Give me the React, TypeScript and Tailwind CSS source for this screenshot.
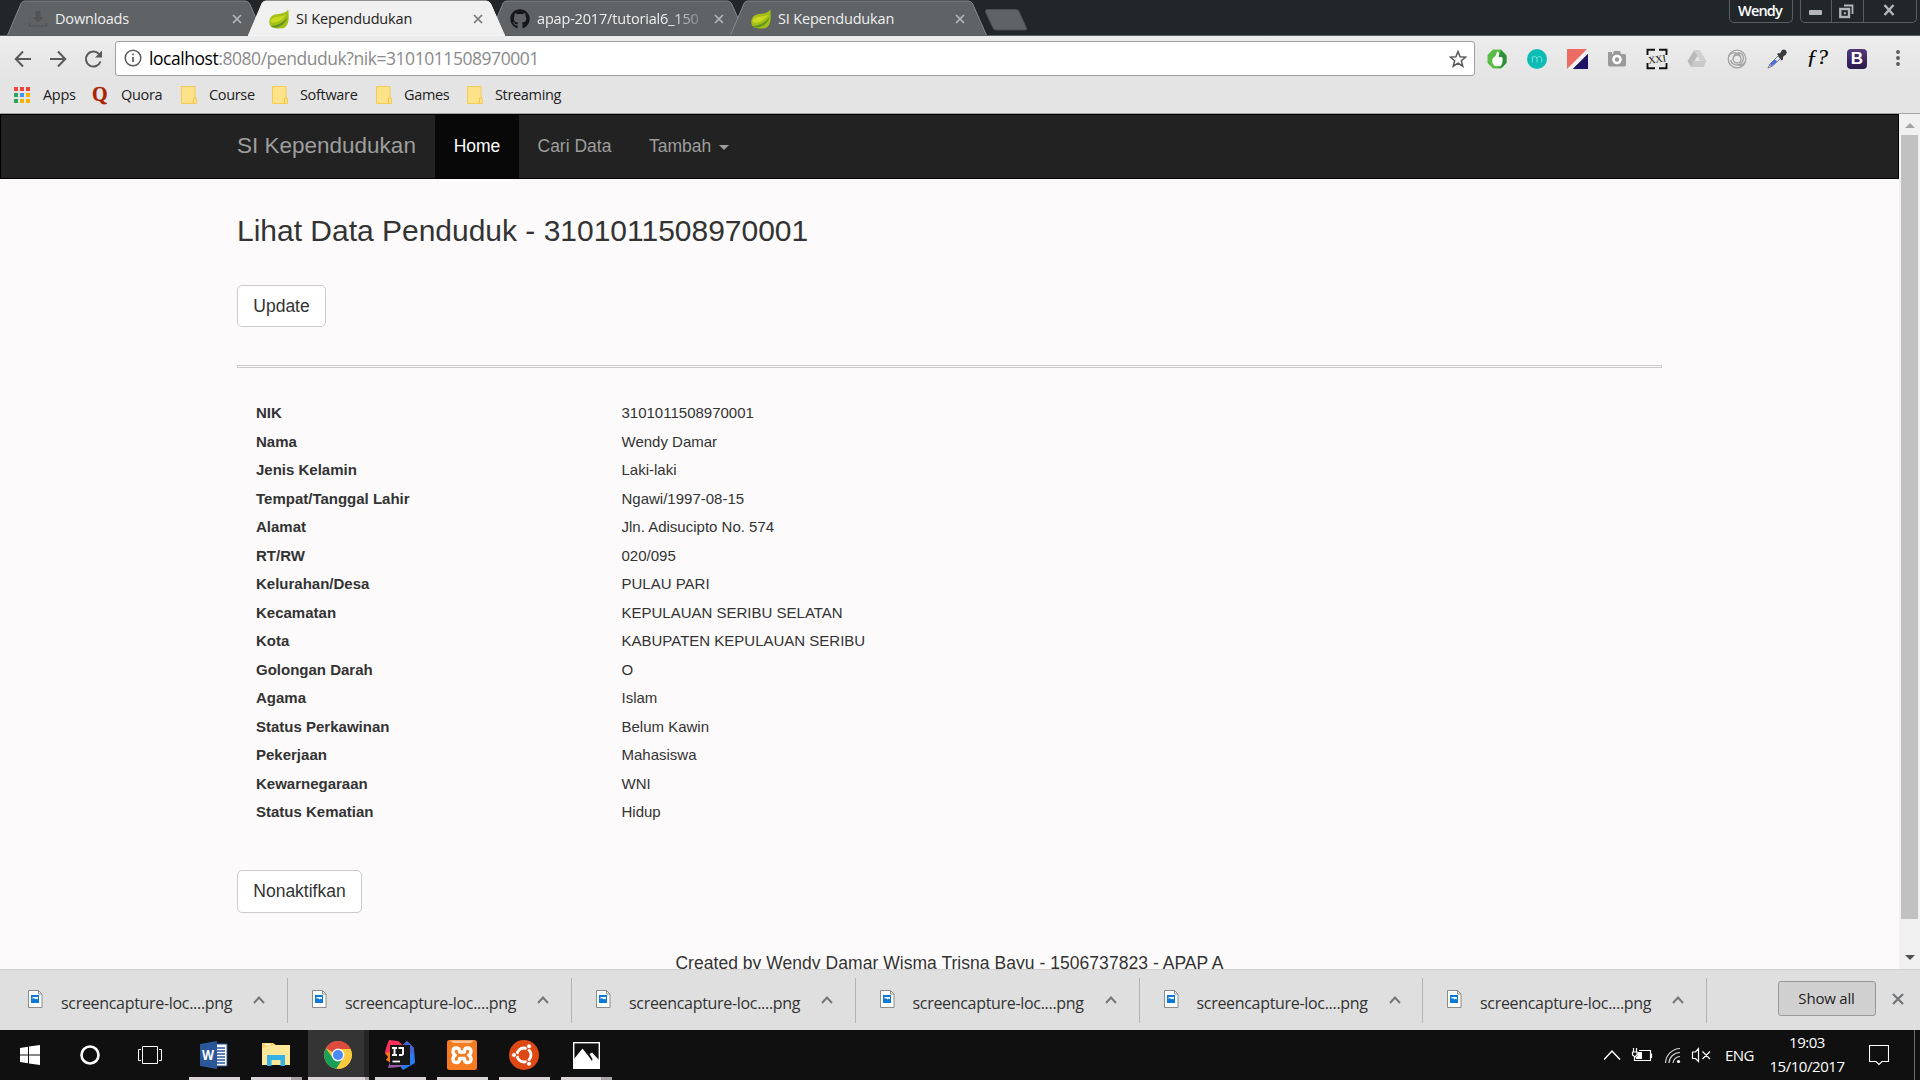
import React from "react";
import { FaGithub } from "react-icons/fa";

const ui = "font-['Open_Sans','Noto_Sans',sans-serif]";

function Leaf() {
  return (
    <svg width="20" height="20" viewBox="0 0 20 20" className="shrink-0">
      <path d="M19.300 0.500C20 8 20.500 16 15 19L11 19.500C8 19.700 4 19.300 2 17.500C-0.800 15-0.300 8.500 4 6.200C8 4.300 16 5.500 19.300 0.500Z" fill="#a3bf16" />
      <path d="M18.700 2C18 6 15 7 10 7.500C5 8 1.500 9.500 1.500 13C5 15 15 13 18.700 2Z" fill="#c9d91f" />
      <path d="M2 17C8 16.500 14.500 14 18.500 8C17.300 13 13 17 8.500 18.300C6 18.800 3.500 18.500 2 17Z" fill="#5f9527" />
    </svg>
  );
}

function Close({ color = "#b4b6b8" }: { color?: string }) {
  return (
    <svg width="10" height="10" viewBox="0 0 10 10" className="absolute left-[224.500px] top-[14px]">
      <path d="M1 1L9 9M9 1L1 9" stroke={color} strokeWidth="1.700" />
    </svg>
  );
}

function Tab({ icon, title, active = false, fade = false }: { icon: React.ReactNode; title: string; active?: boolean; fade?: boolean }) {
  return (
    <div className={`relative -mr-[16px] h-[36px] w-[257px] shrink-0 ${active ? "z-10" : ""}`}>
      <svg width="257" height="36" viewBox="0 0 257 36" className="absolute inset-0">
        <path
          d="M0 36L1.500 33L14 3.500Q15 1 18 1H238Q241 1 242.500 3.500L255.500 33L257 36Z"
          fill={active ? "#f0f0f0" : "#5f6366"}
          stroke={active ? "#f8f8f8" : "#84888a"}
          strokeWidth="1"
        />
      </svg>
      <div className="absolute left-[21px] top-[9px]">{icon}</div>
      <div
        className={`absolute left-[48px] top-[8px] whitespace-nowrap text-[14.500px] leading-[22px] tracking-[-0.180px] ${
          active ? "text-[#222]" : "text-[#eee]"
        } ${fade ? "[mask-image:linear-gradient(to_right,black_134px,transparent_172px)]" : ""}`}
      >
        {title}
      </div>
      <Close color={active ? "#777" : undefined} />
    </div>
  );
}

function TabStrip() {
  return (
    <div className="relative flex h-[36px] bg-[#212629] pl-[7px]">
      <Tab
        title="Downloads"
        icon={
          <svg width="20" height="20" viewBox="0 0 20 20">
            <path d="M7.500 2H12.500V8H15.500L10 13.500L4.500 8H7.500Z" fill="#535353" />
            <path d="M1.500 14V17H18.500V14" fill="none" stroke="#535353" strokeWidth="1.200" />
          </svg>
        }
      />
      <Tab title="SI Kependudukan" active icon={<Leaf />} />
      <Tab title="apap-2017/tutorial6_150" fade icon={<FaGithub size={20} color="#17171a" />} />
      <Tab title="SI Kependudukan" icon={<Leaf />} />
      <svg width="44" height="24" viewBox="0 0 44 24" className="ml-[13px] mt-[8px]">
        <path d="M3 1.500H32Q34 1.500 35 3.500L42.500 20Q43 22 41 22H12Q10 22 9 20L1.500 4Q1 1.500 3 1.500Z" fill="#5f6366" stroke="#4a4e51" />
      </svg>
      <div className="absolute bottom-0 left-0 h-px w-full bg-[#5a5e60]" />
      <div className="absolute right-[127px] top-0 flex h-[23px] w-[64px] items-center justify-center rounded-b-[5px] border border-t-0 border-[#595d60] pr-[2px] text-[14.500px] font-semibold tracking-[-0.850px] text-white">
        Wendy
      </div>
      <div className="absolute right-[3px] top-0 flex h-[23px] w-[117px] rounded-b-[5px] border border-t-0 border-[#595d60]">
        <div className="flex w-[31px] items-center justify-center border-r border-[#595d60]">
          <div className="mr-[2px] mt-[3px] h-[5px] w-[13px] rounded-[1px] bg-[#b3b5b6]" />
        </div>
        <div className="flex w-[32px] items-center justify-center border-r border-[#595d60] pr-[3px]">
          <svg width="15" height="15" viewBox="0 0 15 15">
            <path d="M5 1.500H13.500V10" fill="none" stroke="#b3b5b6" strokeWidth="1.800" />
            <rect x="1.300" y="5" width="8.700" height="8" fill="none" stroke="#b3b5b6" strokeWidth="2.400" />
            <rect x="4.800" y="8.200" width="2" height="2" fill="#b3b5b6" />
          </svg>
        </div>
        <div className="flex flex-1 items-center justify-center pb-[2px] pr-[2px]">
          <svg width="12" height="12" viewBox="0 0 12 12">
            <path d="M1.500 1L10.500 11M10.500 1L1.500 11" stroke="#b3b5b6" strokeWidth="2.500" />
          </svg>
        </div>
      </div>
    </div>
  );
}

const extensions: React.ReactNode[] = [
  <svg key="thumb" width="20" height="20" viewBox="0 0 20 20">
    <path d="M6 0.500H14L19.500 6V14L14 19.500H6L0.500 14V6Z" fill="#5abd45" />
    <path d="M11.500 8H15Q16.500 9 15.800 12.500Q15.500 16 13.500 17.500L10 19L15 18.500L19.500 14V7L14 1Z" fill="#2f8f3f" />
    <path d="M10.500 2.500Q12.300 2.500 12 5L11.700 8H14.500Q16 8.500 15.500 11Q15.200 15.500 13.500 16.800Q10 17.800 7 16.500Q5 15 5.200 11Q5.700 8.500 8 7.500Q9.500 6 9.700 3.500Z" fill="#fff" />
  </svg>,
  <svg key="m" width="20" height="20" viewBox="0 0 20 20">
    <circle cx="10" cy="10" r="10" fill="#0cbcb4" />
    <path d="M5.300 13.500V7.500M5.300 9Q6 7.500 7.700 7.500Q10 7.500 10 9.700V13.500M10 9.700Q10.300 7.500 12.300 7.500Q14.700 7.500 14.700 9.700V13.500" stroke="#6fe3df" fill="none" />
  </svg>,
  <svg key="tri" width="21" height="20" viewBox="0 0 21 20">
    <path d="M0 0H20L0 20Z" fill="#ec6c63" />
    <path d="M21 4.500V20H5.500Z" fill="#1d1464" />
    <path d="M20.500 0.500L1 20H5.500L21 4.500Z" fill="#f4f2f4" />
  </svg>,
  <svg key="camera" width="20" height="20" viewBox="0 0 20 20">
    <path d="M1 5V3H5V5H6L7 2H13L14 5H17.500Q19 5 19 6.500V15.500Q19 17.500 17.500 17.500H2.500Q1 17.500 1 15.500Z" fill="#9a9a9a" />
    <circle cx="10" cy="10.500" r="3.500" fill="#9a9a9a" stroke="#fff" strokeWidth="2.600" />
  </svg>,
  <svg key="xxi" width="22" height="22" viewBox="0 0 22 22">
    <path d="M1.500 7V1.800H9M13 1.800H20.500V7M1.500 15V20.200H9M13 20.200H20.500V15" fill="none" stroke="#111" strokeWidth="1.900" />
    <text x="11" y="14.500" textAnchor="middle" fontFamily="Liberation Serif" fontSize="10" transform="rotate(-8 11 11)" fill="#111">XXI</text>
  </svg>,
  <svg key="drive" width="20" height="20" viewBox="0 0 20 20">
    <path d="M7 1.500H13L6.500 18H4L0.500 12Z" fill="#b9b9b9" />
    <path d="M7 1.500H13L19.500 12H13.500Z" fill="#d0d0d0" />
    <path d="M6.500 12H19.500L16.500 18H4Z" fill="#c9c9c9" />
    <path d="M10 7.500L12.800 12H7.500Z" fill="#e7e7e7" />
  </svg>,
  <svg key="swirl" width="20" height="20" viewBox="0 0 20 20" fill="none" stroke="#a3a3a3" strokeWidth="1.300">
    <circle cx="10" cy="10" r="8.800" />
    <path d="M1.500 8Q3 3.500 8 4Q14 5 14 10Q14 14 10 14Q6.500 14 6 10Q6 5.500 11 4Q16 4 16.500 9Q16 15 10.500 16Q5 16 3.500 11M18 13Q15 17.500 10.500 16M6 10Q6.500 6 10 6Q14 6 14 10" />
  </svg>,
  <svg key="dropper" width="20" height="20" viewBox="0 0 20 20">
    <path d="M1 19L3 15L11 7L13.500 9.500L5.500 17Z" fill="#dfe6f4" stroke="#777" />
    <path d="M3 17L4 14.500L8 10.500L10 12.500L5.500 16.500Z" fill="#3f6be8" />
    <path d="M10 5L11.500 4L13 4.500L15 1Q18.500 -0.500 19.700 3Q20 5.500 17 7L16 8L16 10.500L14.500 11.500Z" fill="#3b3b3f" />
  </svg>,
  <div key="f" className="pb-[4px] font-['Liberation_Serif',serif] text-[22px] leading-[20px] tracking-[-0.500px] text-black [-webkit-text-stroke:0.200px_black]">
    <i>ƒ?</i>
  </div>,
  <div key="b" className="flex h-[20px] w-[20px] items-center justify-center rounded-[4px] bg-linear-to-b from-[#54397d] to-[#2c1a4a] font-['Liberation_Sans',sans-serif] text-[17px] font-bold text-white">B</div>,
];

function Toolbar() {
  return (
    <div className="flex h-[42px] items-center bg-linear-to-b from-[#ededed] to-[#e4e4e4]">
      <svg width="104" height="20" viewBox="0 0 104 20" className="ml-[11px] mt-[4px] shrink-0" fill="none" stroke="#5a5a5a" strokeWidth="2">
        <path d="M20 10H5M12 2.500L4.800 10L12 17.500" />
        <path d="M39 10H54M47 2.500L54.200 10L47 17.500" />
        <path d="M88 5A7.500 7.500 0 1 0 89.500 12.500" />
        <path d="M91 1.500V8.500H84Z" fill="#5a5a5a" stroke="none" />
      </svg>
      <div className="mt-[2px] flex h-[35px] w-[1360px] shrink-0 items-center rounded-[3px] border border-[#a0a0a0] bg-white">
        <svg width="18" height="18" viewBox="0 0 18 18" className="ml-[8px]">
          <circle cx="9" cy="9" r="7.800" fill="none" stroke="#5a5a5a" strokeWidth="1.500" />
          <path d="M9 8V13M9 4.500V6.300" stroke="#5a5a5a" strokeWidth="1.700" />
        </svg>
        <div className="ml-[7px] whitespace-nowrap text-[17.500px] tracking-[-0.450px] text-[#8a8a8a]">
          <span className="text-black">localhost</span>:8080/penduduk?nik=3101011508970001
        </div>
        <svg width="18" height="18" viewBox="0 0 18 18" className="ml-auto mr-[7px] mt-px">
          <path d="M9 1.500L11.100 6.800L16.700 7.100L12.300 10.700L13.800 16.200L9 13.100L4.200 16.200L5.700 10.700L1.300 7.100L6.900 6.800Z" fill="none" stroke="#5a5a5a" strokeWidth="1.500" />
        </svg>
      </div>
      <div className="ml-[2px] mt-[3px] flex">
        {extensions.map((e, i) => (
          <div key={i} className="flex h-[24px] w-[40px] items-center justify-center">{e}</div>
        ))}
      </div>
      <svg width="4" height="16" viewBox="0 0 4 16" className="ml-[19px] mt-[2px]" fill="#5a5a5a">
        <circle cx="2" cy="2" r="1.900" /><circle cx="2" cy="8" r="1.900" /><circle cx="2" cy="14" r="1.900" />
      </svg>
    </div>
  );
}

function Folder() {
  return (
    <svg width="16" height="18" viewBox="0 0 16 18">
      <path d="M0.500 0.500H14V11.500L15.500 12.500V17.500H0.500Z" fill="#fee28a" stroke="#f6cb55" />
      <path d="M12.500 17V12H15" fill="none" stroke="#f2c243" />
    </svg>
  );
}

const appColors = ["#f04438", "#f04438", "#f04438", "#2ba35b", "#3b94ee", "#f5b400", "#2ba35b", "#f5b400", "#f5b400"];

function Bookmarks() {
  const items: { w: string; label: string; icon: React.ReactNode }[] = [
    {
      w: "w-[78px]", label: "Apps",
      icon: (
        <div className="-ml-px grid w-[16px] grid-cols-3 gap-[2px]">
          {appColors.map((c, i) => <div key={i} className="h-[4px] w-[4px]" style={{ backgroundColor: c }} />)}
        </div>
      ),
    },
    { w: "w-[88px]", label: "Quora", icon: <span className="-ml-px -mt-[2px] block font-['Liberation_Serif',serif] text-[20px] font-bold leading-[18px] text-[#aa2200] [-webkit-text-stroke:0.300px_#aa2200]">Q</span> },
    { w: "w-[91px]", label: "Course", icon: <Folder /> },
    { w: "w-[104px]", label: "Software", icon: <Folder /> },
    { w: "w-[91px]", label: "Games", icon: <Folder /> },
    { w: "w-[120px]", label: "Streaming", icon: <Folder /> },
  ];
  return (
    <div className="flex h-[36px] items-center border-b border-[#a3a3a3] bg-[#e4e4e4] pb-[2px] pl-[15px] text-[14.500px] tracking-[-0.330px] text-[#222]">
      {items.map((b) => (
        <div key={b.label} className={`flex items-center ${b.w}`}>
          <div className="mt-px w-[28px] shrink-0">{b.icon}</div>
          <div className="whitespace-nowrap">{b.label}</div>
        </div>
      ))}
    </div>
  );
}

const rows: [string, string][] = [
  ["NIK", "3101011508970001"],
  ["Nama", "Wendy Damar"],
  ["Jenis Kelamin", "Laki-laki"],
  ["Tempat/Tanggal Lahir", "Ngawi/1997-08-15"],
  ["Alamat", "Jln. Adisucipto No. 574"],
  ["RT/RW", "020/095"],
  ["Kelurahan/Desa", "PULAU PARI"],
  ["Kecamatan", "KEPULAUAN SERIBU SELATAN"],
  ["Kota", "KABUPATEN KEPULAUAN SERIBU"],
  ["Golongan Darah", "O"],
  ["Agama", "Islam"],
  ["Status Perkawinan", "Belum Kawin"],
  ["Pekerjaan", "Mahasiswa"],
  ["Kewarnegaraan", "WNI"],
  ["Status Kematian", "Hidup"],
];

function Page() {
  return (
    <div className="h-[855px] flex-1 overflow-hidden bg-[#fcfafb] font-['Liberation_Sans',sans-serif] text-[#333]">
      <nav className="flex h-[65px] border border-[#000] bg-[#222] pl-[236px] text-[17.500px] text-[#9d9d9d]">
        <div className="w-[198px] whitespace-nowrap pt-[17px] text-[22.500px] leading-[27px]">SI Kependudukan</div>
        <div className="w-[84px] bg-[#080808] pt-[19px] text-center leading-[25px] text-white">Home</div>
        <div className="ml-[18.500px] w-[111.500px] pt-[19px] leading-[25px]">Cari Data</div>
        <div className="flex pt-[19px] leading-[25px]">
          Tambah
          <div className="ml-[8px] mt-[11px] h-0 w-0 border-x-[5px] border-t-[5px] border-x-transparent border-t-[#9d9d9d]" />
        </div>
      </nav>
      <main className="ml-[237px] w-[1425px] pt-[35px]">
        <h1 className="text-[30px] leading-[33px] tracking-[-0.010px]">Lihat Data Penduduk - 3101011508970001</h1>
        <button className="mt-[38px] block h-[42px] w-[89px] rounded-[5px] border border-[#ccc] bg-white text-[17.500px]">Update</button>
        <div className="mt-[38px] h-[3px] border border-[#ccc]" />
        <div className="mt-[31px] pl-[19px] text-[15px] leading-[22px]">
          {rows.map(([k, v], i) => (
            <div key={k} className={`flex pt-[3px] ${i % 2 ? "h-[28px]" : "h-[29px]"}`}>
              <div className="w-[365.500px] font-bold">{k}</div>
              <div>{v}</div>
            </div>
          ))}
        </div>
        <button className="mt-[43px] block h-[43px] w-[125px] rounded-[5px] border border-[#ccc] bg-white text-[17.500px]">Nonaktifkan</button>
      </main>
      <footer className="mt-[38px] text-center text-[17.500px] leading-[25px] tracking-[0.040px]">Created by Wendy Damar Wisma Trisna Bayu - 1506737823 - APAP A</footer>
    </div>
  );
}

function Scrollbar() {
  return (
    <div className="flex h-[855px] w-[21px] flex-col items-center bg-[#f1f1f1]">
      <div className="mt-[9px] h-0 w-0 border-x-[5px] border-b-[5px] border-x-transparent border-b-[#a3a3a3]" />
      <div className="mt-[7px] h-[784px] w-[17px] bg-[#c1c1c1]" />
      <div className="mt-[36px] h-0 w-0 border-x-[5px] border-t-[5px] border-x-transparent border-t-[#505050]" />
    </div>
  );
}

function Shelf() {
  return (
    <div className="flex h-[61px] border-t border-[#d2d0d0] bg-[#dfdfdf] text-[#333]">
      {[0, 1, 2, 3, 4, 5].map((i) => (
        <div key={i} className={`flex shrink-0 ${i === 0 ? "w-[288px] pl-[28px]" : i % 2 ? "w-[284px] pl-[24px]" : "w-[283.500px] pl-[24px]"}`}>
          <svg width="15" height="18" viewBox="0 0 15 18" className="mt-[20px] shrink-0">
            <path d="M0.500 0.500H10.500L14 4V17.500H0.500Z" fill="#fff" stroke="#8b8b8b" />
            <path d="M10.500 0.500V4H14" fill="none" stroke="#8b8b8b" />
            <path d="M3 5H11V13H3Z" fill="#0b79d8" />
            <path d="M4.500 7H10V9.500L8.800 8.500L7.500 9.500L6 8L4.500 9Z" fill="#fff" />
          </svg>
          <div className="ml-[18px] mt-[21px] w-[180px] whitespace-nowrap text-[16px] leading-[24px] tracking-[-0.310px]">screencapture-loc....png</div>
          <svg width="12" height="8" viewBox="0 0 12 8" className="ml-[12px] mt-[26px] shrink-0">
            <path d="M1 7L6 1.500L11 7" fill="none" stroke="#777" strokeWidth="2" />
          </svg>
          <div className="ml-auto mt-[8px] h-[45px] w-px bg-[#b3b3b3]" />
        </div>
      ))}
      <div className="ml-[71px] mt-[11px] flex h-[35px] w-[98px] items-center justify-center rounded-[3px] border border-[#999] bg-[#d0d0d0] pb-px pr-px text-[15px] tracking-[-0.200px] text-[#222]">Show all</div>
      <svg width="12" height="12" viewBox="0 0 12 12" className="ml-[16px] mt-[23px]">
        <path d="M1 1L11 11M11 1L1 11" stroke="#73777a" strokeWidth="2.300" />
      </svg>
    </div>
  );
}

const apps: { name: string; icon: React.ReactNode; stacked?: boolean; active?: boolean }[] = [
  {
    name: "word",
    icon: (
      <svg width="28" height="28" viewBox="0 0 28 28">
        <path d="M14 3H27V25H14Z" fill="#fff" stroke="#2b579a" />
        <path d="M16 7H25M16 10H25M16 13H25M16 16H25M16 19H25M16 22H25" stroke="#2b579a" strokeWidth="1.300" />
        <path d="M0 3L17 0V28L0 25Z" fill="#2b579a" />
        <text x="2" y="19" fontFamily="Open Sans" fontWeight="700" fontSize="14" textLength="12" lengthAdjust="spacingAndGlyphs" fill="#fff">W</text>
      </svg>
    ),
  },
  {
    name: "explorer", stacked: true,
    icon: (
      <svg width="28" height="28" viewBox="0 0 28 28">
        <path d="M0 2H11L14 4H27V24H0Z" fill="#fbd367" />
        <path d="M0 7L11 4H28V24H0Z" fill="#ffe79a" />
        <path d="M3 3.500H8" stroke="#fff" strokeWidth="1.500" />
        <path d="M5 25V14H23V25H18.500V19H9.500V25Z" fill="#35b1e6" />
      </svg>
    ),
  },
  {
    name: "chrome", active: true,
    icon: (
      <svg width="28" height="28" viewBox="0 0 28 28">
        <circle cx="14" cy="14" r="13.800" fill="#fbca3e" />
        <path d="M14 14L1.900 7.200A13.800 13.800 0 0 1 26.500 8H14Z" fill="#dc4b3e" />
        <path d="M14 14L8.800 17L1.900 7.200A13.800 13.800 0 0 0 12.500 27.700L19.200 17Z" fill="#1a9f5b" />
        <path d="M14 8H26.500A13.800 13.800 0 0 1 12.500 27.700L19.200 17Z" fill="#fbca3e" />
        <circle cx="14" cy="14" r="6.400" fill="#f4f4f4" />
        <circle cx="14" cy="14" r="5" fill="#4a8af4" />
      </svg>
    ),
  },
  {
    name: "intellij",
    icon: (
      <svg width="30" height="30" viewBox="0 0 30 30">
        <path d="M1 8L4 0L13 1L20 7L12 20L0 13Z" fill="#fe315d" />
        <path d="M18 5L22 1L29 8L30 23L18 30L12 22Z" fill="#2a7bf0" />
        <path d="M18 5L22 1L29 8V14L22 12Z" fill="#4a63d2" />
        <path d="M0 13L6 12L8 24L1 20L3 17Z" fill="#f97a12" />
        <path d="M3 28L6 18L18 26L14 27Z" fill="#9b59a8" />
        <rect x="5" y="5" width="20" height="20" fill="#171717" />
        <path d="M7 8H12M9.500 8V15M7 15H12M13.500 8H18V13.500Q18 15 16.300 15H14" fill="none" stroke="#fff" strokeWidth="1.900" />
        <path d="M7.500 21.500H15" stroke="#fff" strokeWidth="1.700" />
      </svg>
    ),
  },
  {
    name: "xampp",
    icon: (
      <svg width="30" height="30" viewBox="0 0 30 30">
        <rect width="30" height="30" rx="2.500" fill="#f47b20" />
        <path d="M3 0.500H27L24 3H6Z" fill="#fac29a" />
        <path
          d="M12.500 11Q12.500 8 9.300 8Q6 8 6 11.500Q6 14 8.300 15Q6 16.500 6 19.300Q6 22.500 9.300 22.500Q12.500 22.500 12.500 19.500V18.500H17.500V19.500Q17.500 22.500 20.700 22.500Q24 22.500 24 19.300Q24 16.500 21.700 15Q24 14 24 11.500Q24 8 20.700 8Q17.500 8 17.500 11V12H12.500Z"
          fill="none"
          stroke="#fff"
          strokeWidth="3.400"
          strokeLinejoin="round"
        />
      </svg>
    ),
  },
  {
    name: "ubuntu",
    icon: (
      <svg width="30" height="30" viewBox="0 0 30 30">
        <circle cx="15" cy="15" r="15" fill="#dd4814" />
        <circle cx="15" cy="15" r="7" fill="none" stroke="#fff" strokeWidth="2.800" />
        <path d="M15 15L2 15M15 15L21.500 3.700M15 15L21.500 26.300" stroke="#dd4814" strokeWidth="1.500" />
        <g fill="#fff" stroke="#dd4814" strokeWidth="1">
          <circle cx="5" cy="15" r="2.500" /><circle cx="20" cy="6.300" r="2.500" /><circle cx="20" cy="23.700" r="2.500" />
        </g>
      </svg>
    ),
  },
  {
    name: "photos", stacked: true,
    icon: (
      <svg width="27" height="27" viewBox="0 0 27 27">
        <rect x="0.700" y="0.700" width="25.600" height="25.600" fill="#101010" stroke="#fff" strokeWidth="1.400" />
        <path d="M1 17L9.500 6.500L15 13.500L19 19L19.500 17L16.500 12L19 10.500L26 18V26H1Z" fill="#fff" />
      </svg>
    ),
  },
];

function Taskbar() {
  return (
    <div className="flex h-[50px] bg-[#101010] text-white">
      <svg width="189" height="50" viewBox="0 0 189 50" className="shrink-0">
        <path d="M20 18L28 16.800V24.500H20ZM29 16.600L40 15V24.500H29ZM20 25.500H28V33.200L20 32ZM29 25.500H40V35L29 33.400Z" fill="#fff" />
        <circle cx="90" cy="25" r="8.500" fill="none" stroke="#fff" strokeWidth="2.600" />
        <path d="M142.500 16.500H157.500V33.500H142.500ZM141 19.500H138.500V30.500H141M159 19.500H161.500V30.500H159" fill="none" stroke="#fff" />
      </svg>
      {apps.map((a) => (
        <div key={a.name} className={`flex shrink-0 flex-col ${a.active ? "-ml-[5px] mr-[6px] w-[61px] bg-[#343434]" : "mr-[11px] w-[51px]"}`}>
          <div className={`flex h-[47px] items-center pt-[3px] ${a.active ? "border-r-[5px] border-[#252525] pl-[16px]" : "justify-center pr-px"}`}>
            {a.icon}
          </div>
          <div className="flex h-[3px] bg-[#d8d4d8]">
            {a.stacked && <div className="ml-auto w-[11px] bg-[#a7a3a6]" />}
            {a.active && <div className="ml-auto w-[4px] bg-[#a7a3a6]" />}
          </div>
        </div>
      ))}
      <div className="ml-auto flex w-[316px] shrink-0">
        <svg width="116" height="50" viewBox="1604 0 116 50" fill="none" stroke="#fff" strokeWidth="1.200">
          <path d="M1604 29.500L1612 21L1620 29.500" strokeWidth="1.500" />
          <path d="M1639 20.500H1650.500V30.500H1634.500V27M1651.500 23.500V28" />
          <path d="M1637.500 22H1642V29H1636V27L1637.500 26Z" fill="#fff" stroke="none" />
          <path d="M1632.500 22H1637V25L1635 27L1632.500 25ZM1633.500 18V22M1636.500 18V22" />
          <path d="M1665.500 33A15 15 0 0 1 1680 18.500M1669 33A11 11 0 0 1 1680 22.500M1673 33A7 7 0 0 1 1680 26.500" stroke="#cfcfcf" />
          <circle cx="1678.500" cy="31.500" r="1.600" fill="#fff" stroke="none" />
          <path d="M1692.500 22H1695.500L1698.500 18.500V31.500L1695.500 28.500H1692.500ZM1702.500 21.500L1710 29M1710 21.500L1702.500 29" />
        </svg>
        <div className="ml-[5px] w-[34px] pt-[13px] text-[15px] leading-[24px] tracking-[-0.600px]">ENG</div>
        <div className="ml-[3px] w-[90px] whitespace-nowrap pt-[2px] text-center text-[15px] leading-[23px] tracking-[-0.450px]">
          <div className="-mt-px mb-px">19:03</div>
          <div>15/10/2017</div>
        </div>
        <svg width="20" height="22" viewBox="0 0 20 22" className="ml-[17px] mt-[14px]">
          <path d="M0.500 1.500H19.500V17.500H13L10 20.500L7 17.500H0.500Z" fill="none" stroke="#fff" strokeWidth="1.100" />
        </svg>
        <div className="ml-[25px] w-px bg-[#6a6a6a]" />
      </div>
    </div>
  );
}

export default function App() {
  return (
    <div className={`flex h-[1080px] w-[1920px] flex-col overflow-hidden ${ui}`}>
      <TabStrip />
      <Toolbar />
      <Bookmarks />
      <div className="flex">
        <Page />
        <Scrollbar />
      </div>
      <Shelf />
      <Taskbar />
    </div>
  );
}
